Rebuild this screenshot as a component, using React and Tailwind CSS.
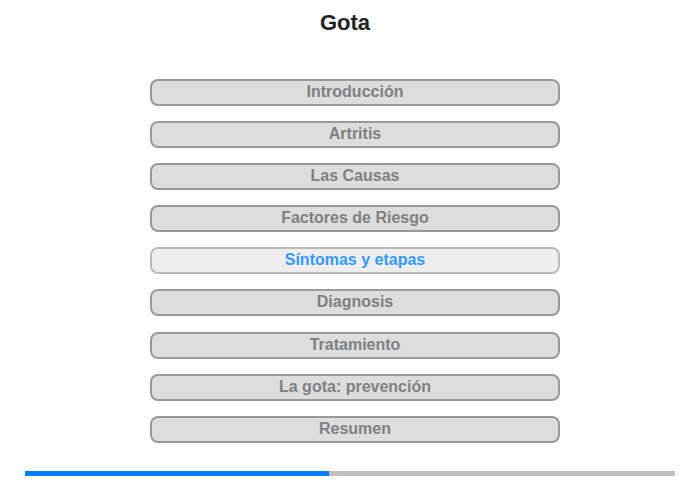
import React from "react";

const items = [
  "Introducción",
  "Artritis",
  "Las Causas",
  "Factores de Riesgo",
  "Síntomas y etapas",
  "Diagnosis",
  "Tratamiento",
  "La gota: prevención",
  "Resumen",
];

export default function App() {
  return (
    <div className="w-[700px] h-[480px] bg-white" style={{ fontFamily: '"Liberation Sans", Arial, sans-serif' }}>
      <div className="pt-[12px] pr-[10px] flex justify-center">
        <h1 className="text-[22px] leading-[22px] font-bold text-[#222]">Gota</h1>
      </div>
      <div className="mt-[45px] ml-[150px] w-[410px] flex flex-col gap-[15.1px]">
        {items.map((t, i) => {
          const active = i === 4;
          return (
            <div
              key={t}
              className={
                active
                  ? "h-[27px] rounded-[8px] border-2 border-[#bbbbbb] bg-[#eeeeee] flex items-center justify-center pb-[1px] text-[16px] leading-[18px] font-bold text-[#3399ff]"
                  : "h-[27px] rounded-[8px] border-2 border-[#999999] bg-[#dddddd] flex items-center justify-center pb-[1px] text-[16px] leading-[18px] font-bold text-[#808080]"
              }
            >
              {t}
            </div>
          );
        })}
      </div>
      <div className="mt-[28px] ml-[25px] w-[650px] h-[5px] bg-[#c0c0c0] flex">
        <div className="w-[304px] h-full bg-[#0080ff]" />
      </div>
    </div>
  );
}
